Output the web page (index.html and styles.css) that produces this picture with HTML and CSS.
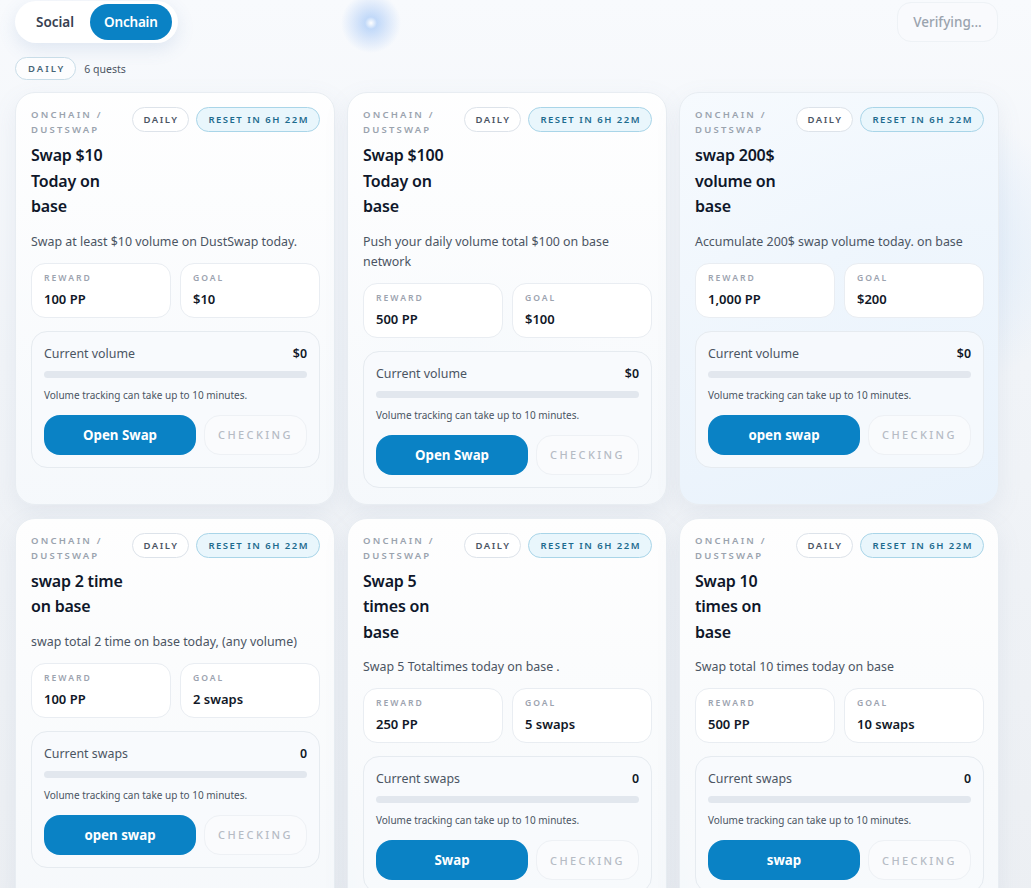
FILE: index.html
```html
<!DOCTYPE html>
<html lang="en">
<head>
<meta charset="utf-8">
<title>Quests</title>
<link rel="stylesheet" href="styles.css">
</head>
<body>
<div class="page">
  <div class="topbar">
    <div class="tabs">
      <button class="tab">Social</button>
      <button class="tab active">Onchain</button>
    </div>
    <button class="verify">Verifying...</button>
  </div>
  <div class="section-head">
    <span class="pill">DAILY</span>
    <span class="count">6 quests</span>
  </div>
  <div class="grid">
    <div class="card">
      <div class="card-head">
        <div class="head-left">
          <div class="cat">ONCHAIN / DUSTSWAP</div>
          <h3 class="title">Swap $10 Today on base</h3>
        </div>
        <div class="badges"><span class="badge">DAILY</span><span class="badge reset">RESET IN 6H 22M</span></div>
      </div>
      <p class="desc">Swap at least $10 volume on DustSwap today.</p>
      <div class="stats">
        <div class="stat"><div class="stat-label">REWARD</div><div class="stat-value">100 PP</div></div>
        <div class="stat"><div class="stat-label">GOAL</div><div class="stat-value">$10</div></div>
      </div>
      <div class="progress">
        <div class="prog-row"><span>Current volume</span><b>$0</b></div>
        <div class="bar"></div>
        <div class="note">Volume tracking can take up to 10 minutes.</div>
        <div class="actions"><button class="primary">Open Swap</button><button class="checking">CHECKING</button></div>
      </div>
    </div>
    <div class="card">
      <div class="card-head">
        <div class="head-left">
          <div class="cat">ONCHAIN / DUSTSWAP</div>
          <h3 class="title">Swap $100 Today on base</h3>
        </div>
        <div class="badges"><span class="badge">DAILY</span><span class="badge reset">RESET IN 6H 22M</span></div>
      </div>
      <p class="desc">Push your daily volume total $100 on base network</p>
      <div class="stats">
        <div class="stat"><div class="stat-label">REWARD</div><div class="stat-value">500 PP</div></div>
        <div class="stat"><div class="stat-label">GOAL</div><div class="stat-value">$100</div></div>
      </div>
      <div class="progress">
        <div class="prog-row"><span>Current volume</span><b>$0</b></div>
        <div class="bar"></div>
        <div class="note">Volume tracking can take up to 10 minutes.</div>
        <div class="actions"><button class="primary">Open Swap</button><button class="checking">CHECKING</button></div>
      </div>
    </div>
    <div class="card tinted">
      <div class="card-head">
        <div class="head-left">
          <div class="cat">ONCHAIN / DUSTSWAP</div>
          <h3 class="title">swap 200$ volume on base</h3>
        </div>
        <div class="badges"><span class="badge">DAILY</span><span class="badge reset">RESET IN 6H 22M</span></div>
      </div>
      <p class="desc">Accumulate 200$ swap volume today. on base</p>
      <div class="stats">
        <div class="stat"><div class="stat-label">REWARD</div><div class="stat-value">1,000 PP</div></div>
        <div class="stat"><div class="stat-label">GOAL</div><div class="stat-value">$200</div></div>
      </div>
      <div class="progress">
        <div class="prog-row"><span>Current volume</span><b>$0</b></div>
        <div class="bar"></div>
        <div class="note">Volume tracking can take up to 10 minutes.</div>
        <div class="actions"><button class="primary">open swap</button><button class="checking">CHECKING</button></div>
      </div>
    </div>
    <div class="card">
      <div class="card-head">
        <div class="head-left">
          <div class="cat">ONCHAIN / DUSTSWAP</div>
          <h3 class="title">swap 2 time on base</h3>
        </div>
        <div class="badges"><span class="badge">DAILY</span><span class="badge reset">RESET IN 6H 22M</span></div>
      </div>
      <p class="desc">swap total 2 time on base today, (any volume)</p>
      <div class="stats">
        <div class="stat"><div class="stat-label">REWARD</div><div class="stat-value">100 PP</div></div>
        <div class="stat"><div class="stat-label">GOAL</div><div class="stat-value">2 swaps</div></div>
      </div>
      <div class="progress">
        <div class="prog-row"><span>Current swaps</span><b>0</b></div>
        <div class="bar"></div>
        <div class="note">Volume tracking can take up to 10 minutes.</div>
        <div class="actions"><button class="primary">open swap</button><button class="checking">CHECKING</button></div>
      </div>
    </div>
    <div class="card">
      <div class="card-head">
        <div class="head-left">
          <div class="cat">ONCHAIN / DUSTSWAP</div>
          <h3 class="title">Swap 5 times on base</h3>
        </div>
        <div class="badges"><span class="badge">DAILY</span><span class="badge reset">RESET IN 6H 22M</span></div>
      </div>
      <p class="desc">Swap 5 Totaltimes today on base .</p>
      <div class="stats">
        <div class="stat"><div class="stat-label">REWARD</div><div class="stat-value">250 PP</div></div>
        <div class="stat"><div class="stat-label">GOAL</div><div class="stat-value">5 swaps</div></div>
      </div>
      <div class="progress">
        <div class="prog-row"><span>Current swaps</span><b>0</b></div>
        <div class="bar"></div>
        <div class="note">Volume tracking can take up to 10 minutes.</div>
        <div class="actions"><button class="primary">Swap</button><button class="checking">CHECKING</button></div>
      </div>
    </div>
    <div class="card">
      <div class="card-head">
        <div class="head-left">
          <div class="cat">ONCHAIN / DUSTSWAP</div>
          <h3 class="title">Swap 10 times on base</h3>
        </div>
        <div class="badges"><span class="badge">DAILY</span><span class="badge reset">RESET IN 6H 22M</span></div>
      </div>
      <p class="desc">Swap total 10 times today on base</p>
      <div class="stats">
        <div class="stat"><div class="stat-label">REWARD</div><div class="stat-value">500 PP</div></div>
        <div class="stat"><div class="stat-label">GOAL</div><div class="stat-value">10 swaps</div></div>
      </div>
      <div class="progress">
        <div class="prog-row"><span>Current swaps</span><b>0</b></div>
        <div class="bar"></div>
        <div class="note">Volume tracking can take up to 10 minutes.</div>
        <div class="actions"><button class="primary">swap</button><button class="checking">CHECKING</button></div>
      </div>
    </div>
  </div>
</div>
</body>
</html>
```

FILE: styles.css
```css
* { box-sizing: border-box; }
html, body { margin: 0; padding: 0; }
body {
  font-family: "Noto Sans", "Open Sans", sans-serif;
  color: #111827;
  background:
    radial-gradient(circle at 371px 23px, rgba(255,255,255,0.9) 0, rgba(140,185,245,0.5) 6px, rgba(160,195,245,0.35) 16px, rgba(200,220,250,0) 30px),
    radial-gradient(ellipse 200px 160px at 880px 250px, rgba(200,225,250,0.7), rgba(200,225,250,0)),
    radial-gradient(ellipse 120px 80px at 470px 340px, rgba(200,225,250,0.6), rgba(200,225,250,0)),
    linear-gradient(180deg, #f8fafd 0%, #f1f4f8 40%, #eceff3 100%);
  min-height: 888px;
  overflow: hidden;
}
.page { padding: 2px 33px 0 15px; }
.topbar { display: flex; justify-content: space-between; align-items: flex-start; }
.tabs {
  display: flex; padding: 3px 6px 3px 3px;
  background: #fff; border-radius: 22px;
  box-shadow: 0 6px 18px rgba(80,120,180,0.14);
  margin-top: -1px;
}
.tab {
  font-family: inherit; font-size: 13.5px; font-weight: 600; border: 0; background: transparent;
  color: #374151; height: 36px; padding: 0 16px 0 18px; border-radius: 18px;
}
.tab.active { background: #0a82c5; color: #fff; padding: 0 14px; letter-spacing: -0.2px; }
.verify {
  font-family: inherit; font-size: 13.5px; font-weight: 500; color: #9aa3ae;
  background: rgba(248,250,253,0.9); border: 1px solid #eef2f6; border-radius: 14px;
  height: 40px; width: 101px; padding: 0;
}
.section-head { display: flex; align-items: center; gap: 8px; margin-top: 14px; }
.pill {
  font-size: 9.5px; font-weight: 600; letter-spacing: 2px; color: #466577;
  border: 1px solid #c9dde8; border-radius: 12px; padding: 0 10px 0 12px; height: 23px; line-height: 21px;
  background: rgba(255,255,255,0.7);
}
.count { font-size: 10.5px; color: #4b5563; }
.grid {
  display: grid; grid-template-columns: repeat(3, 320px); gap: 13px 12px; margin-top: 12px;
}
.card {
  background: linear-gradient(180deg, rgba(255,255,255,0.92), rgba(246,249,252,0.92));
  border: 1px solid #e8edf2; border-radius: 20px;
  box-shadow: 0 8px 24px rgba(120,140,170,0.10);
  padding: 13px 14px 16px 15px;
  display: flex; flex-direction: column;
}
.card.tinted { background: linear-gradient(160deg, rgba(246,250,254,0.95), rgba(232,242,252,0.92)); }
.card-head { display: flex; justify-content: space-between; gap: 8px; }
.head-left { flex: 1; min-width: 0; }
.cat {
  font-size: 9.5px; font-weight: 600; letter-spacing: 2.2px; color: #9aa3ae; line-height: 15px;
  width: 96px; margin-top: 1px;
}
.title { margin: 6px 0 0; font-size: 16px; font-weight: 600; line-height: 25.5px; color: #0f172a; letter-spacing: -0.2px; }
.badges { display: flex; gap: 7px; flex: none; margin-top: 1px; }
.badge {
  height: 25px; line-height: 23px; border: 1px solid #dde3ea; border-radius: 13px; background: #fff;
  font-size: 9.5px; font-weight: 600; letter-spacing: 1.5px; color: #4b5563; padding: 0 10px 0 11px;
}
.badge.reset { background: #e9f6fc; border-color: #a9d5e8; color: #1d6b8e; padding: 0 10px 0 11px; }
.desc { margin: 12px 0 0; font-size: 12.4px; line-height: 20px; color: #4b5563; }
.stats { display: grid; grid-template-columns: 1fr 1fr; gap: 9px; margin-top: 11px; }
.stat {
  background: #fff; border: 1px solid #e9edf2; border-radius: 14px; height: 55px; padding: 8px 12px;
}
.stat-label { font-size: 8.6px; font-weight: 600; letter-spacing: 2px; color: #9ca3af; line-height: 13px; }
.stat-value { font-size: 13px; font-weight: 600; color: #111827; margin-top: 6px; line-height: 16px; }
.progress {
  margin-top: 13px; border: 1px solid #e6ebf0; border-radius: 16px; background: rgba(248,250,252,0.8);
  padding: 13px 12px 12px 12px;
}
.prog-row { display: flex; justify-content: space-between; font-size: 12.4px; color: #4b5563; line-height: 18px; }
.prog-row b { color: #111827; font-weight: 600; }
.bar { height: 7px; border-radius: 4px; background: #e2e7ee; margin-top: 8px; }
.note { font-size: 10px; color: #4b5563; margin-top: 10px; line-height: 14px; }
.actions { display: flex; gap: 8px; margin-top: 13px; }
.primary {
  font-family: inherit; width: 152px; height: 40px; border: 0; border-radius: 16px;
  background: #0a82c5; color: #fff; font-size: 13.3px; font-weight: 700;
}
.checking {
  font-family: inherit; flex: 1; height: 40px; border: 1px solid #eef1f5; border-radius: 16px;
  background: rgba(250,251,253,0.9); color: #b6bcc5; font-size: 11px; font-weight: 500; letter-spacing: 2.4px;
}
```
